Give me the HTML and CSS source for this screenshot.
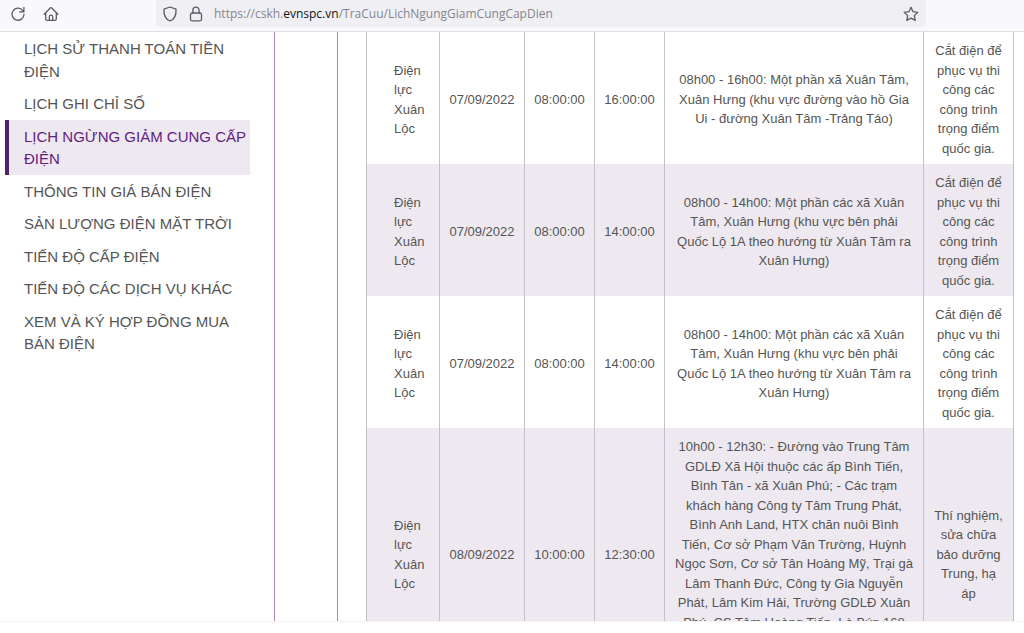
FILE: index.html
```html
<!DOCTYPE html>
<html lang="vi">
<head>
<meta charset="utf-8">
<title>Lịch ngừng giảm cung cấp điện</title>
<link rel="stylesheet" href="styles.css">
</head>
<body>
<header class="toolbar">
  <div class="actions">
    <button class="icon-button" type="button" aria-label="Tải lại">
      <svg width="16" height="16" viewBox="0 0 16 16"><path d="M13.2 5.2A6 6 0 1 0 14 8.2M13.9 1.5v4.3H9.6"/></svg>
    </button>
    <button class="icon-button" type="button" aria-label="Trang chủ">
      <svg width="16" height="16" viewBox="0 0 16 16"><path d="M1.2 8.2 7.2 2q.8-.8 1.6 0l6 6.2M2.7 7v6q0 1.4 1.4 1.4h7.8q1.4 0 1.4-1.4V7M6.3 14.2v-3.4a1.7 1.7 0 0 1 3.4 0v3.4"/></svg>
    </button>
  </div>
  <div class="address">
    <svg width="16" height="16" viewBox="0 0 16 16"><path d="M8 1 14 3.2C14.4 9 12 13.4 8 15 4 13.4 1.6 9 2 3.2Z"/></svg>
    <svg width="16" height="16" viewBox="0 0 16 16"><path d="M4.9 7V4.2a3.1 3.1 0 0 1 6.2 0V7"/><rect x="2.5" y="7" width="11" height="7.8" rx="1.5"/></svg>
    <div class="url" role="textbox" contenteditable="true" spellcheck="false" aria-label="Địa chỉ">https://cskh.<span class="host">evnspc.vn</span>/TraCuu/LichNgungGiamCungCapDien</div>
    <button class="icon-button" type="button" aria-label="Đánh dấu trang">
      <svg width="16" height="16" viewBox="0 0 16 16"><path d="m8 1.3 2 4.4 4.8.6-3.5 3.3.9 4.8L8 12.1l-4.2 2.3.9-4.8L1.2 6.3 6 5.7Z"/></svg>
    </button>
  </div>
</header>
<div class="page">
  <nav class="sidebar">
    <ul class="menu">
      <li><a class="menu-link" href="#">LỊCH SỬ THANH TOÁN TIỀN ĐIỆN</a></li>
      <li><a class="menu-link" href="#">LỊCH GHI CHỈ SỐ</a></li>
      <li><a class="menu-link active" href="#" aria-current="page">LỊCH NGỪNG GIẢM CUNG CẤP ĐIỆN</a></li>
      <li><a class="menu-link" href="#">THÔNG TIN GIÁ BÁN ĐIỆN</a></li>
      <li><a class="menu-link" href="#">SẢN LƯỢNG ĐIỆN MẶT TRỜI</a></li>
      <li><a class="menu-link" href="#">TIẾN ĐỘ CẤP ĐIỆN</a></li>
      <li><a class="menu-link" href="#">TIẾN ĐỘ CÁC DỊCH VỤ KHÁC</a></li>
      <li><a class="menu-link" href="#">XEM VÀ KÝ HỢP ĐỒNG MUA BÁN ĐIỆN</a></li>
    </ul>
  </nav>
  <main class="content">
    <table class="schedule">
      <colgroup><col class="col-unit"><col class="col-date"><col class="col-time"><col class="col-time"><col><col class="col-reason"></colgroup>
      <tbody>
        <tr><td>Điện lực Xuân Lộc</td><td>07/09/2022</td><td>08:00:00</td><td>16:00:00</td><td class="area">08h00 - 16h00: Một phần xã Xuân Tâm, Xuân Hưng (khu vực đường vào hồ Gia Ui - đường Xuân Tâm -Trảng Táo)</td><td>Cắt điện để phục vụ thi công các công trình trọng điểm quốc gia.</td></tr>
        <tr><td>Điện lực Xuân Lộc</td><td>07/09/2022</td><td>08:00:00</td><td>14:00:00</td><td class="area">08h00 - 14h00: Một phần các xã Xuân Tâm, Xuân Hưng (khu vực bên phải Quốc Lộ 1A theo hướng từ Xuân Tâm ra Xuân Hưng)</td><td>Cắt điện để phục vụ thi công các công trình trọng điểm quốc gia.</td></tr>
        <tr><td>Điện lực Xuân Lộc</td><td>07/09/2022</td><td>08:00:00</td><td>14:00:00</td><td class="area">08h00 - 14h00: Một phần các xã Xuân Tâm, Xuân Hưng (khu vực bên phải Quốc Lộ 1A theo hướng từ Xuân Tâm ra Xuân Hưng)</td><td>Cắt điện để phục vụ thi công các công trình trọng điểm quốc gia.</td></tr>
        <tr class="long"><td>Điện lực Xuân Lộc</td><td>08/09/2022</td><td>10:00:00</td><td>12:30:00</td><td class="area">10h00 - 12h30: - Đường vào Trung Tâm GDLĐ Xã Hội thuộc các ấp Bình Tiến, Bình Tân - xã Xuân Phú; - Các trạm khách hàng Công ty Tâm Trung Phát, Bình Anh Land, HTX chăn nuôi Bình Tiến, Cơ sở Phạm Văn Trường, Huỳnh Ngọc Sơn, Cơ sở Tân Hoàng Mỹ, Trại gà Lâm Thanh Đức, Công ty Gia Nguyễn Phát, Lâm Kim Hải, Trường GDLĐ Xuân Phú, CS Tâm Hoàng Tiến, Lò Bún 168</td><td>Thí nghiệm, sửa chữa bảo dưỡng Trung, hạ áp</td></tr>
      </tbody>
    </table>
  </main>
</div>
</body>
</html>
```
FILE: styles.css
```css
* {
  box-sizing: border-box;
}

body {
  margin: 0;
  height: 100vh;
  padding-bottom: 11px;
  display: flex;
  flex-direction: column;
  overflow: hidden;
  background: #fff;
  color: #555;
  font-family: "Liberation Sans", Arial, sans-serif;
  font-size: 13px;
  line-height: 1.5;
}

.toolbar {
  flex: none;
  display: flex;
  height: 32px;
  padding: 0 98px 4px 0;
  background: #f9f9fb;
  border-bottom: 1px solid #e0e0e3;
}

.toolbar svg {
  display: block;
  flex: none;
  fill: none;
  stroke: #5b5b66;
  stroke-width: 1.3;
  stroke-linecap: round;
  stroke-linejoin: round;
}

.icon-button {
  padding: 0;
  border: 0;
  background: none;
}

.actions {
  flex: none;
  display: flex;
  align-items: center;
  gap: 17px;
  width: 156px;
  padding-left: 10px;
}

.address {
  flex: 1;
  min-width: 0;
  display: flex;
  align-items: center;
  gap: 10px;
  padding: 0 7px 0 6px;
  border-radius: 0 0 4px 4px;
  background: #f0f0f4;
}

.url {
  flex: 1;
  min-width: 0;
  overflow: hidden;
  color: #85858f;
  font-family: "Open Sans", "Noto Sans", sans-serif;
  font-size: 12px;
  line-height: 20px;
  white-space: nowrap;
}

.host {
  color: #15141a;
}

.page {
  flex: 1;
  min-height: 0;
  display: flex;
  gap: 62px;
  overflow: hidden;
  border-bottom: 1px solid #f4f4f4;
}

.sidebar {
  flex: none;
  width: 275px;
  padding: 0 24px 0 5px;
  border-right: 1px solid #a987bb;
}

.menu {
  margin: 0;
  padding: 0;
  list-style: none;
}

.menu-link {
  display: block;
  padding: 6px 4px 4px 15px;
  border-left: 4px solid transparent;
  color: #555;
  font-size: 15px;
  text-decoration: none;
}

.menu-link.active {
  border-left-color: #55206f;
  background: #eee9f1;
  color: #63217f;
}

.content {
  flex: 1;
  min-width: 0;
  padding: 0 10px 0 28px;
  border-left: 1px solid #a987bb;
}

.schedule {
  width: 100%;
  table-layout: fixed;
  border-collapse: collapse;
}

.schedule td {
  padding: 9px 8px 6px;
  border: 0 solid #c4c2c5;
  border-width: 0 1px;
  text-align: center;
  vertical-align: middle;
}

.schedule td:first-child {
  padding-left: 27px;
  text-align: left;
}

.schedule .area {
  padding-left: 9px;
  padding-right: 9px;
}

.schedule tr:nth-child(even) {
  background: #eee9f1;
}

.schedule .long td {
  height: 250px;
}

.schedule .long .area {
  vertical-align: top;
}

.col-unit {
  width: 73px;
}

.col-date {
  width: 85px;
}

.col-time {
  width: 70px;
}

.col-reason {
  width: 90px;
}
```
